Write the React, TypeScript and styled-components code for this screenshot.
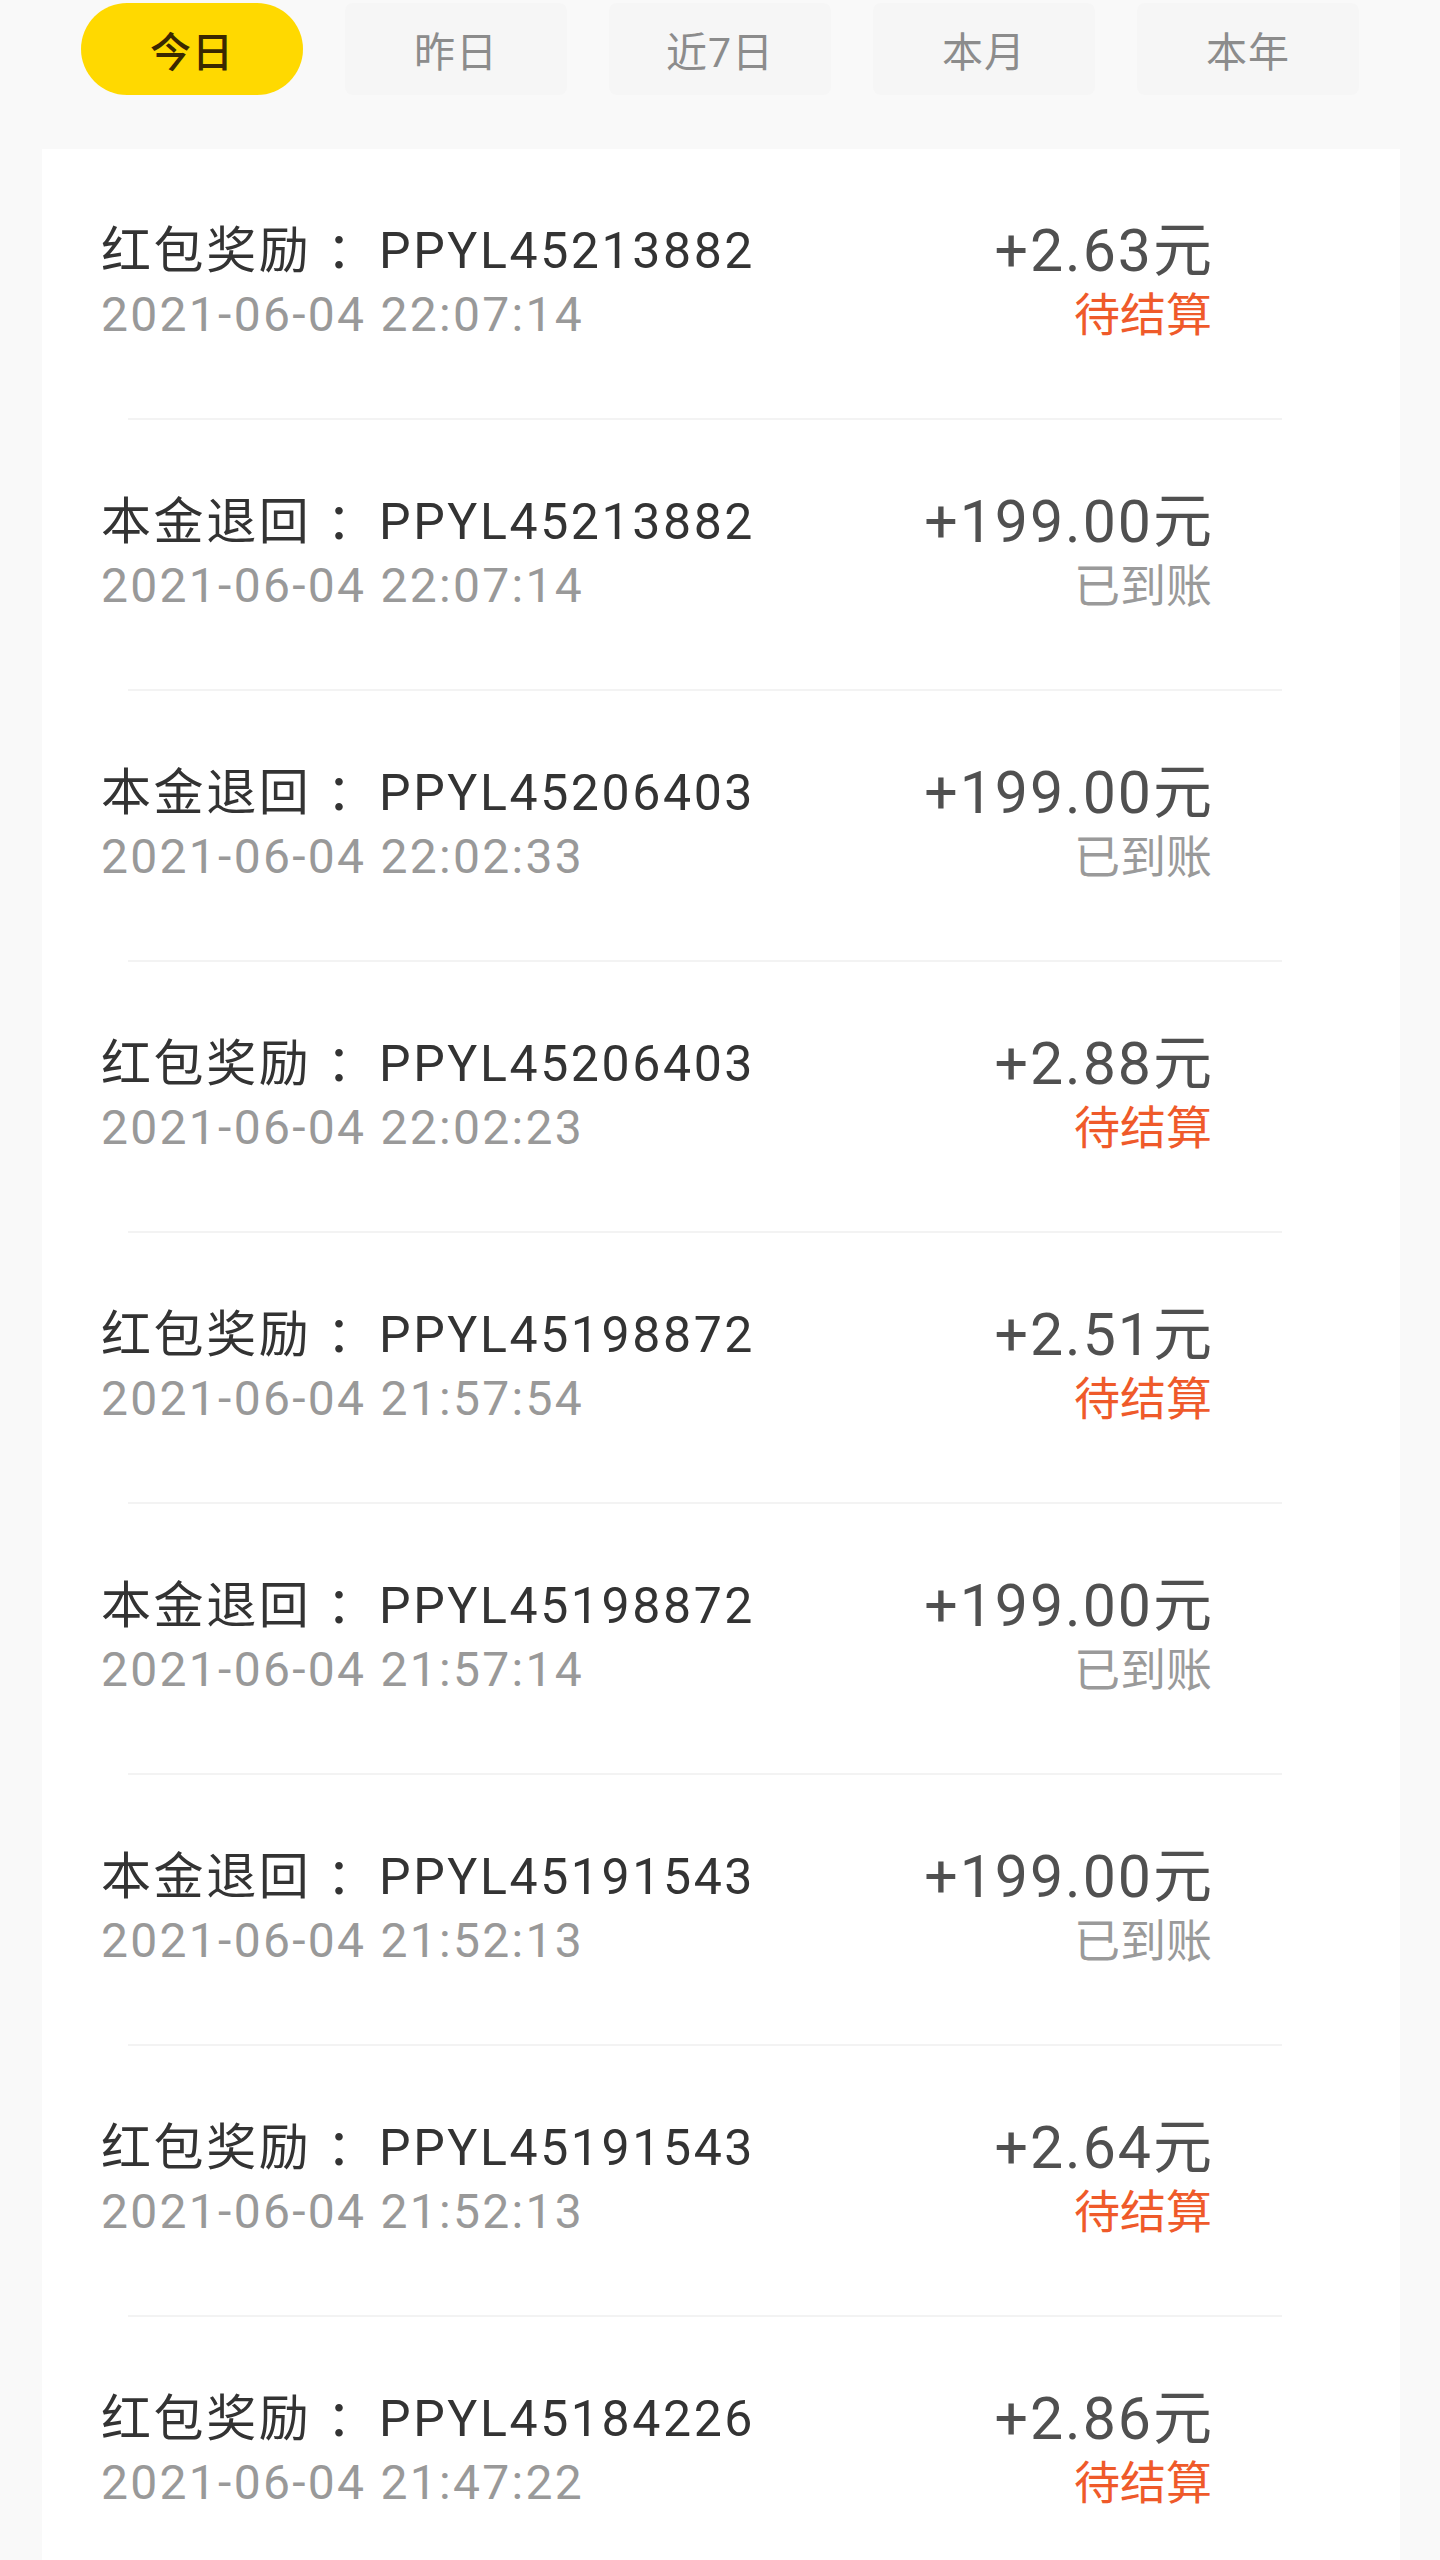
import React from "react";
import styled, { createGlobalStyle } from "styled-components";

const GlobalStyle = createGlobalStyle`
  html, body {
    margin: 0;
    padding: 0;
    background: #f9f9f9;
  }
  body {
    font-family: Roboto, "Noto Sans CJK SC", sans-serif;
  }
`;

const Page = styled.div`
  min-height: 2560px;
  display: flex;
  flex-direction: column;
  background: #f9f9f9;
`;

const TabBar = styled.div`
  display: flex;
  gap: 42px;
  padding: 3px 0 0 81px;
  height: 149px;
  box-sizing: border-box;
`;

const Tab = styled.div<{ $active?: boolean }>`
  width: 222px;
  height: 92px;
  display: flex;
  align-items: center;
  justify-content: center;
  border-radius: ${({ $active }) => ($active ? "46px" : "8px")};
  background: ${({ $active }) => ($active ? "#ffd900" : "#f6f6f6")};
  color: ${({ $active }) => ($active ? "#3a2800" : "#8c8c8c")};
  font-size: 41px;
  font-weight: ${({ $active }) => ($active ? 500 : 400)};
  letter-spacing: 1px;
`;

const Card = styled.div`
  flex: 1;
  margin: 0 40px 0 42px;
  background: #ffffff;
`;

const Row = styled.div`
  display: grid;
  grid-template-columns: 1fr auto;
  align-items: center;
  padding: 70px 188px 71px 59px;
`;

const Left = styled.div`
  display: flex;
  flex-direction: column;
`;

const Right = styled.div`
  display: flex;
  flex-direction: column;
  align-items: flex-end;
`;

const Title = styled.div`
  height: 64px;
  line-height: 64px;
  font-size: 50px;
  letter-spacing: 2.6px;
  color: #333333;
  white-space: pre;
`;

const DateText = styled.div`
  height: 64px;
  line-height: 64px;
  font-size: 48px;
  letter-spacing: 2.3px;
  color: #999999;
`;

const Amount = styled.div`
  height: 64px;
  line-height: 64px;
  font-size: 59px;
  letter-spacing: 2px;
  color: #505050;
  margin-right: -2px;
`;

const Status = styled.div<{ $pending: boolean }>`
  height: 64px;
  line-height: 64px;
  font-size: 46px;
  color: ${({ $pending }) => ($pending ? "#ef5a2a" : "#9a9a9a")};
`;

const Divider = styled.div`
  height: 2px;
  margin: 0 118px 0 86px;
  background: #f3f3f3;
`;

type Record = {
  kind: string;
  order: string;
  time: string;
  amount: string;
  pending: boolean;
};

const records: Record[] = [
  { kind: "红包奖励", order: "PPYL45213882", time: "2021-06-04 22:07:14", amount: "+2.63元", pending: true },
  { kind: "本金退回", order: "PPYL45213882", time: "2021-06-04 22:07:14", amount: "+199.00元", pending: false },
  { kind: "本金退回", order: "PPYL45206403", time: "2021-06-04 22:02:33", amount: "+199.00元", pending: false },
  { kind: "红包奖励", order: "PPYL45206403", time: "2021-06-04 22:02:23", amount: "+2.88元", pending: true },
  { kind: "红包奖励", order: "PPYL45198872", time: "2021-06-04 21:57:54", amount: "+2.51元", pending: true },
  { kind: "本金退回", order: "PPYL45198872", time: "2021-06-04 21:57:14", amount: "+199.00元", pending: false },
  { kind: "本金退回", order: "PPYL45191543", time: "2021-06-04 21:52:13", amount: "+199.00元", pending: false },
  { kind: "红包奖励", order: "PPYL45191543", time: "2021-06-04 21:52:13", amount: "+2.64元", pending: true },
  { kind: "红包奖励", order: "PPYL45184226", time: "2021-06-04 21:47:22", amount: "+2.86元", pending: true },
];

const tabs = ["今日", "昨日", "近7日", "本月", "本年"];

export default function App() {
  return (
    <Page>
      <GlobalStyle />
      <TabBar>
        {tabs.map((t, i) => (
          <Tab key={t} $active={i === 0}>
            {t}
          </Tab>
        ))}
      </TabBar>
      <Card>
        {records.map((r, i) => (
          <React.Fragment key={i}>
            <Row>
              <Left>
                <Title>{`${r.kind} ：${r.order}`}</Title>
                <DateText>{r.time}</DateText>
              </Left>
              <Right>
                <Amount>{r.amount}</Amount>
                <Status $pending={r.pending}>{r.pending ? "待结算" : "已到账"}</Status>
              </Right>
            </Row>
            <Divider />
          </React.Fragment>
        ))}
      </Card>
    </Page>
  );
}
